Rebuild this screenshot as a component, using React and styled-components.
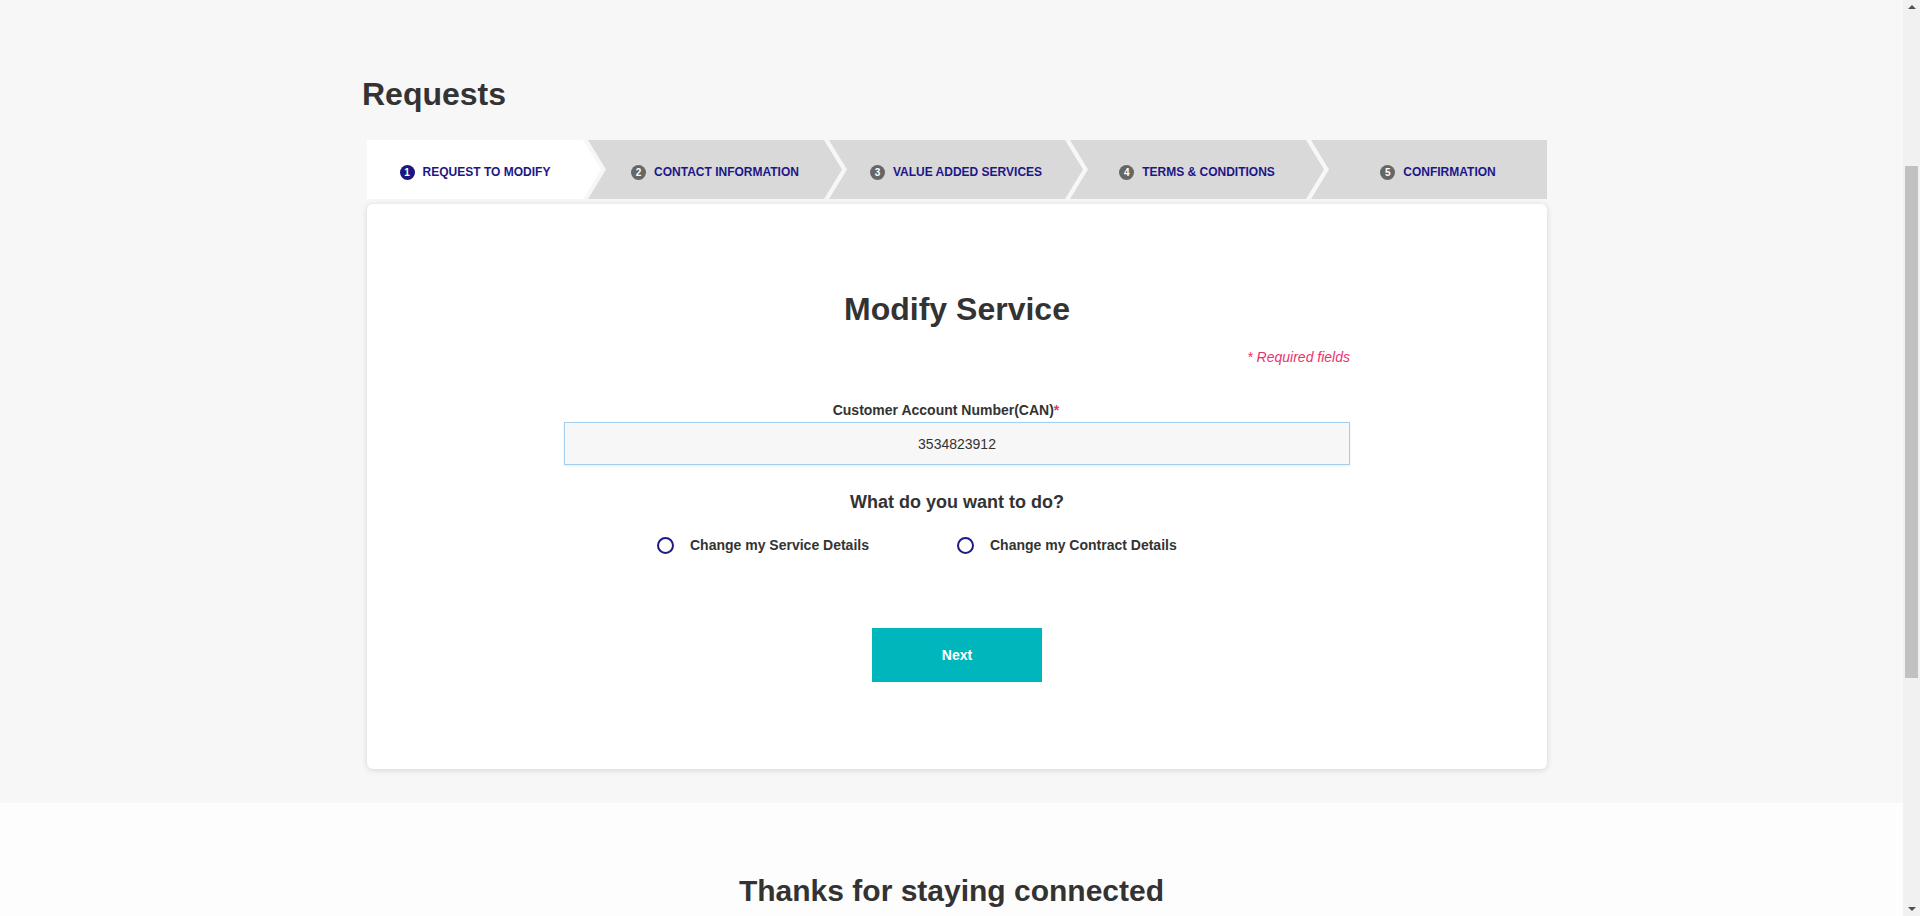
import React, { useState } from "react";
import styled, { createGlobalStyle } from "styled-components";

const GlobalStyle = createGlobalStyle`
  html, body { margin: 0; padding: 0; }
  body {
    background: #f7f7f7;
    font-family: "Liberation Sans", Arial, Helvetica, sans-serif;
    color: #333;
  }
  * { box-sizing: border-box; }
`;

const Page = styled.div`
  padding-right: 17px;
`;

const ScrollTrack = styled.div`
  position: fixed;
  top: 0;
  right: 0;
  width: 17px;
  height: 100vh;
  background: #f1f1f1;
  display: flex;
  flex-direction: column;
  align-items: center;
  justify-content: space-between;
  padding: 5px 0;
  z-index: 10;
`;

const ScrollArrow = styled.span`
  width: 0;
  height: 0;
  border-left: 4px solid transparent;
  border-right: 4px solid transparent;
  ${(p) => (p.$down ? "border-top: 4px solid #505050;" : "border-bottom: 4px solid #505050;")}
`;

const ScrollThumb = styled.span`
  position: absolute;
  top: 166px;
  left: 2px;
  width: 13px;
  height: 512px;
  background: #c1c1c1;
`;

const Main = styled.main`
  padding: 76px 0 34px;
`;

const Container = styled.div`
  width: 1190px;
  margin-left: calc(50% - 589.5px);
`;

const PageTitle = styled.h1`
  margin: 0 0 27px;
  font-size: 32px;
  line-height: 37px;
  font-weight: 700;
  color: #333;
`;

const Stepper = styled.ol`
  display: flex;
  height: 59px;
  margin: 0 5px;
  padding: 0;
  list-style: none;
`;

const clipFor = (first, last) => {
  if (first)
    return "polygon(0 0, calc(100% - 18px) 0, 100% 50%, calc(100% - 18px) 100%, 0 100%)";
  if (last) return "polygon(0 0, 100% 0, 100% 100%, 0 100%, 18px 50%)";
  return "polygon(0 0, calc(100% - 18px) 0, 100% 50%, calc(100% - 18px) 100%, 0 100%, 18px 50%)";
};

const Step = styled.li`
  flex: ${(p) => (p.$first ? "0 0 234px" : p.$last ? "1 1 auto" : "0 0 254px")};
  margin-left: ${(p) => (p.$first ? "0" : "-13px")};
  padding: 5px ${(p) => (p.$last ? "0" : "18px")} 0 ${(p) => (p.$first ? "0" : "18px")};
  background: ${(p) => (p.$active ? "#ffffff" : "#d9d9d9")};
  clip-path: ${(p) => clipFor(p.$first, p.$last)};
  display: flex;
  align-items: center;
  justify-content: center;
  gap: 8px;
`;

const StepNumber = styled.span`
  width: 15px;
  height: 15px;
  border-radius: 50%;
  background: ${(p) => (p.$active ? "#1b1780" : "#666666")};
  color: #fff;
  font-size: 10px;
  font-weight: 700;
  line-height: 15px;
  text-align: center;
  flex: none;
`;

const StepLabel = styled.span`
  font-size: 12px;
  font-weight: 700;
  color: #1c1689;
  text-transform: uppercase;
  white-space: nowrap;
`;

const Card = styled.section`
  margin: 5px 5px 0;
  background: #fff;
  border-radius: 6px;
  box-shadow: 0 1px 6px rgba(0, 0, 0, 0.14);
  padding: 86px 0 87px;
`;

const FormColumn = styled.div`
  width: 786px;
  margin: 0 auto;
  display: flex;
  flex-direction: column;
  align-items: center;
`;

const CardTitle = styled.h2`
  margin: 0;
  font-size: 32px;
  line-height: 38px;
  font-weight: 700;
  color: #333;
`;

const RequiredNote = styled.p`
  align-self: flex-end;
  margin: 21px 0 0;
  font-size: 14px;
  line-height: 16px;
  font-style: italic;
  color: #e8336b;
`;

const FieldLabel = styled.label`
  margin: 37px 22px 0 0;
  font-size: 14px;
  line-height: 17px;
  font-weight: 700;
  color: #333;
`;

const Asterisk = styled.span`
  color: #e8336b;
`;

const TextInput = styled.input`
  margin-top: 3px;
  width: 100%;
  height: 43px;
  background: #f7f7f7;
  border: 1px solid #a4cdee;
  box-shadow: 0 1px 2px rgba(0, 0, 0, 0.08);
  font-family: inherit;
  font-size: 14px;
  color: #333;
  text-align: center;
  outline: none;
`;

const Question = styled.h3`
  margin: 26px 0 0;
  font-size: 18px;
  line-height: 22px;
  font-weight: 700;
  color: #333;
`;

const RadioGroup = styled.div`
  margin-top: 22px;
  width: 600px;
  display: grid;
  grid-template-columns: 1fr 1fr;
`;

const RadioOption = styled.label`
  display: flex;
  align-items: center;
  gap: 16px;
  height: 20px;
  cursor: pointer;
  font-size: 14px;
  font-weight: 700;
  color: #333;
`;

const RadioCircle = styled.span`
  width: 17px;
  height: 17px;
  border-radius: 50%;
  border: 2px solid #1e1a8a;
  background: #fff;
  flex: none;
  display: flex;
  align-items: center;
  justify-content: center;
  &::after {
    content: "";
    width: 7px;
    height: 7px;
    border-radius: 50%;
    background: ${(p) => (p.$checked ? "#1e1a8a" : "transparent")};
  }
`;

const NextButton = styled.button`
  margin-top: 73px;
  width: 170px;
  height: 54px;
  border: none;
  background: #00b6bd;
  color: #fff;
  font-family: inherit;
  font-size: 14px;
  font-weight: 700;
  cursor: pointer;
`;

const Footer = styled.footer`
  background: #fdfdfd;
  padding: 70px 0 260px;
  text-align: center;
`;

const FooterTitle = styled.h2`
  margin: 0;
  font-size: 30px;
  line-height: 36px;
  font-weight: 700;
  color: #333;
`;

const steps = [
  "Request to Modify",
  "Contact Information",
  "Value Added Services",
  "Terms & Conditions",
  "Confirmation",
];

export default function App() {
  const [choice, setChoice] = useState(null);
  const options = ["Change my Service Details", "Change my Contract Details"];
  return (
    <>
      <GlobalStyle />
      <Page>
        <Main>
          <Container>
            <PageTitle>Requests</PageTitle>
            <Stepper>
              {steps.map((s, i) => (
                <Step
                  key={s}
                  $first={i === 0}
                  $last={i === steps.length - 1}
                  $active={i === 0}
                >
                  <StepNumber $active={i === 0}>{i + 1}</StepNumber>
                  <StepLabel>{s}</StepLabel>
                </Step>
              ))}
            </Stepper>
            <Card>
              <FormColumn>
                <CardTitle>Modify Service</CardTitle>
                <RequiredNote>* Required fields</RequiredNote>
                <FieldLabel htmlFor="can">
                  Customer Account Number(CAN)<Asterisk>*</Asterisk>
                </FieldLabel>
                <TextInput id="can" defaultValue="3534823912" />
                <Question>What do you want to do?</Question>
                <RadioGroup>
                  {options.map((o) => (
                    <RadioOption key={o} onClick={() => setChoice(o)}>
                      <RadioCircle $checked={choice === o} />
                      {o}
                    </RadioOption>
                  ))}
                </RadioGroup>
                <NextButton type="button">Next</NextButton>
              </FormColumn>
            </Card>
          </Container>
        </Main>
        <Footer>
          <FooterTitle>Thanks for staying connected</FooterTitle>
        </Footer>
      </Page>
      <ScrollTrack aria-hidden="true">
        <ScrollArrow />
        <ScrollThumb />
        <ScrollArrow $down />
      </ScrollTrack>
    </>
  );
}
